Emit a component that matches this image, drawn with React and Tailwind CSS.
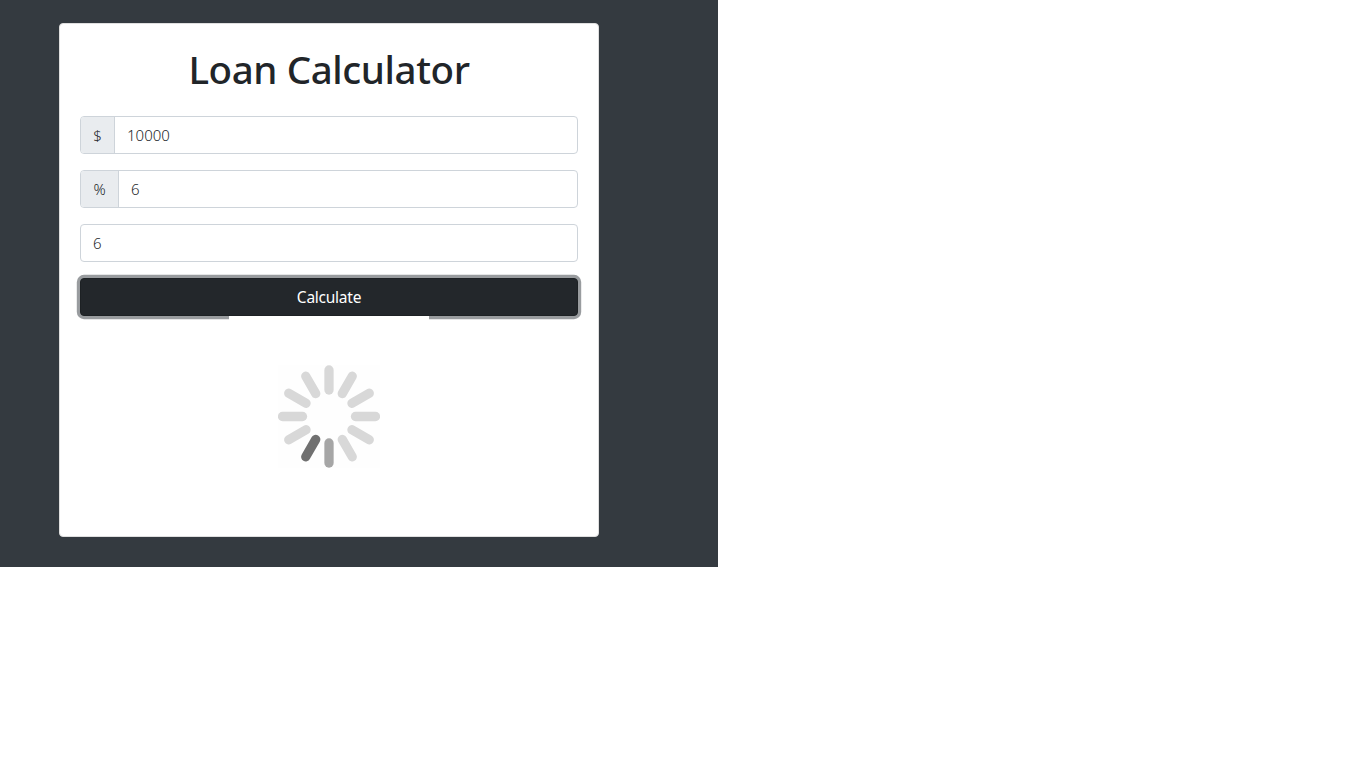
import React from 'react';

const SPOKES = [
  '#d8d8d8', '#d8d8d8', '#d8d8d8', '#d8d8d8', '#d8d8d8', '#d8d8d8',
  '#a6a6a6', '#707070', '#d8d8d8', '#d8d8d8', '#d8d8d8', '#d8d8d8',
];

function Spinner() {
  return (
    <div className="relative mx-auto flex h-[200px] w-[200px] justify-center bg-white pt-[49px]">
      <svg className="h-[103px] w-[102px]" viewBox="-51 -51.5 102 103" aria-hidden="true">
        <rect x="-51" y="-51.5" width="102" height="103" fill="#fefefe" />
        {SPOKES.map((color, i) => (
          <line
            key={i}
            x1="0"
            y1="-46.5"
            x2="0"
            y2="-26.5"
            stroke={color}
            strokeWidth="9.3"
            strokeLinecap="round"
            transform={`rotate(${i * 30})`}
          />
        ))}
      </svg>
    </div>
  );
}

function Field({ addon, addonClass, value }) {
  return (
    <div className="mb-4 flex h-[38px] overflow-hidden rounded-[4px] border border-[#ced4da] bg-white text-[15px] font-light leading-6 text-[#212529]">
      {addon && (
        <span className={`flex items-center justify-center border-r border-[#ced4da] bg-[#e9ecef] ${addonClass}`}>
          {addon}
        </span>
      )}
      <input className="min-w-0 flex-1 bg-transparent px-3 outline-none" type="text" defaultValue={value} />
    </div>
  );
}

export default function App() {
  return (
    <div className="h-screen overflow-hidden bg-white font-['Noto_Sans',sans-serif] text-[#212529]">
      <main className="h-[567px] w-[718px] bg-[#343a40] pl-[59px] pt-[23px]">
        <section className="h-[514px] w-[540px] rounded-[4px] border border-[#dfdfdf] bg-white p-5">
          <h1 className="mb-6 flex h-12 items-center justify-center whitespace-nowrap pt-px text-[38.5px] font-medium leading-[48px] tracking-[-0.4px]">
            Loan Calculator
          </h1>
          <Field addon="$" addonClass="w-[34px]" value="10000" />
          <Field addon="%" addonClass="w-[38px]" value="6" />
          <Field value="6" />
          <button className="block h-[38px] w-full rounded-[4px] border border-[#1d2124] bg-[#23272b] text-[15.5px] leading-6 tracking-[-0.25px] text-white shadow-[0_0_0_3.2px_#999c9f]">
            Calculate
          </button>
          <Spinner />
        </section>
      </main>
    </div>
  );
}
